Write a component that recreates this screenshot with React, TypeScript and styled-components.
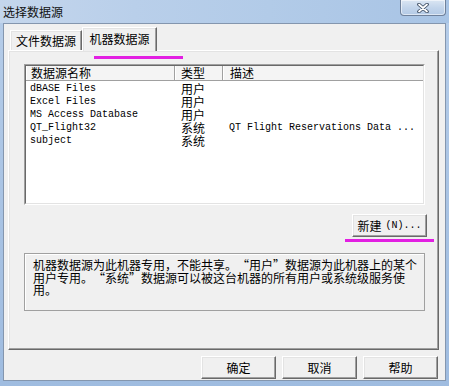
import React from "react";
import styled, { createGlobalStyle } from "styled-components";

const Global = createGlobalStyle`
  *, *::before, *::after { box-sizing: border-box; }
  html, body { margin: 0; padding: 0; }
  body {
    width: 449px;
    height: 386px;
    overflow: hidden;
    font-family: "Noto Sans CJK SC", "Liberation Sans", sans-serif;
    font-size: 12px;
    color: #000;
    background: #a9c4e4;
  }
`;

const Window = styled.div`
  width: 449px;
  height: 386px;
  display: flex;
  flex-direction: column;
  background: linear-gradient(180deg, #b6cde9 0%, #a7c2e3 60%, #9fbce0 100%);
`;

const TitleBar = styled.div`
  height: 23px;
  display: flex;
  align-items: flex-start;
  background: linear-gradient(90deg, #c4d6ec 0%, #b9cfea 30%, #b2cbe8 60%, #a8c4e5 100%);
`;

const Title = styled.div`
  padding-left: 3px;
  line-height: 23px;
  font-size: 12px;
  color: #111;
`;

const CloseButton = styled.div`
  margin-left: auto;
  margin-right: 3px;
  width: 46px;
  height: 16px;
  border: 1px solid #6f819b;
  border-top: none;
  border-radius: 0 0 4px 4px;
  background: linear-gradient(180deg, #dbe6f3 0%, #c3d5eb 50%, #b3cae6 100%);
  box-shadow: inset 0 0 0 1px rgba(255, 255, 255, 0.55);
  display: flex;
  align-items: center;
  justify-content: center;
`;

const Client = styled.div`
  flex: 1;
  margin: 0 3px 5px 3px;
  border: 1px solid #8496ae;
  background: #f0f0f0;
  display: flex;
  flex-direction: column;
`;

const TabStrip = styled.div`
  height: 26px;
  padding-left: 6px;
  display: flex;
  align-items: flex-end;
`;

const Tab = styled.div<{ $active?: boolean }>`
  position: relative;
  z-index: ${(p) => (p.$active ? 2 : 1)};
  width: ${(p) => (p.$active ? 75 : 72)}px;
  height: ${(p) => (p.$active ? 24 : 20)}px;
  margin-bottom: ${(p) => (p.$active ? -1 : 0)}px;
  background: #f0f0f0;
  border-style: solid;
  border-width: 1px 1px 0 1px;
  border-color: #ffffff #696969 transparent #ffffff;
  box-shadow: inset -1px 0 0 #a0a0a0, inset 1px 1px 0 #e3e3e3;
  display: flex;
  align-items: center;
  justify-content: center;
  padding-bottom: ${(p) => (p.$active ? 2 : 0)}px;
  font-size: 12px;
  line-height: 16px;
`;

const Panel = styled.div`
  margin-left: 4px;
  width: 431px;
  height: 300px;
  border: 1px solid;
  border-color: #ffffff #696969 #696969 #ffffff;
  box-shadow: inset -1px -1px 0 #a0a0a0, inset 1px 1px 0 #e3e3e3;
  display: flex;
  flex-direction: column;
  align-items: flex-start;
`;

const Mark = styled.div<{ $left: number; $top: number }>`
  margin-left: ${(p) => p.$left}px;
  margin-top: ${(p) => p.$top}px;
  width: 89px;
  height: 3px;
  background: #e21fe2;
`;

const ListFrame = styled.div`
  margin-left: 15px;
  margin-top: 5px;
  width: 401px;
  height: 141px;
  border: 1px solid;
  border-color: #a0a0a0 #ffffff #ffffff #a0a0a0;
`;

const ListInner = styled.div`
  width: 100%;
  height: 100%;
  border: 1px solid;
  border-color: #696969 #e3e3e3 #e3e3e3 #696969;
  background: #ffffff;
  display: flex;
  flex-direction: column;
`;

const HeaderRow = styled.div`
  display: grid;
  grid-template-columns: 149px 48px 1fr;
  height: 15px;
  background: #f4f4f4;
  border-bottom: 1px solid #a0a0a0;
`;

const HeaderCell = styled.div<{ $pad: number; $last?: boolean }>`
  padding-left: ${(p) => p.$pad}px;
  height: 14px;
  line-height: 14px;
  font-size: 12px;
  border-right: ${(p) => (p.$last ? "none" : "1px solid #a0a0a0")};
  box-shadow: inset 1px 0 0 #ffffff;
  white-space: nowrap;
`;

const Rows = styled.div`
  padding-top: 1px;
  display: flex;
  flex-direction: column;
`;

const Row = styled.div`
  display: grid;
  grid-template-columns: 149px 48px 1fr;
  height: 13px;
  align-items: center;
`;

const NameCell = styled.div`
  padding-left: 4px;
  font-family: "Liberation Mono", "Noto Sans CJK SC", monospace;
  font-size: 10px;
  line-height: 13px;
  white-space: nowrap;
`;

const TypeCell = styled.div`
  padding-left: 6px;
  font-size: 12px;
  line-height: 13px;
  white-space: nowrap;
`;

const DescCell = styled.div`
  padding-left: 6px;
  font-family: "Liberation Mono", monospace;
  font-size: 10px;
  line-height: 13px;
  white-space: nowrap;
  overflow: hidden;
`;

const Button = styled.div<{ $left?: number; $top?: number }>`
  margin-left: ${(p) => p.$left ?? 0}px;
  margin-top: ${(p) => p.$top ?? 0}px;
  width: 75px;
  height: 23px;
  border: 1px solid;
  border-color: #ffffff #696969 #696969 #ffffff;
  box-shadow: inset -1px -1px 0 #a0a0a0, inset 1px 1px 0 #e3e3e3;
  background: #f0f0f0;
  display: flex;
  align-items: center;
  justify-content: center;
  font-size: 12px;
  line-height: 16px;
  white-space: nowrap;
`;

const Mnemonic = styled.span`
  font-family: "Liberation Mono", monospace;
  font-size: 10px;
  margin-left: 4px;
`;

const DescBox = styled.div`
  margin-left: 15px;
  margin-top: 11px;
  width: 401px;
  height: 58px;
  border: 1px solid #a0a0a0;
  box-shadow: inset 1px 1px 0 #ffffff;
  padding: 5px 0 0 8px;
  font-size: 12px;
  line-height: 12.5px;
  white-space: nowrap;
`;

const Quote = styled.span<{ $close?: boolean }>`
  display: inline-block;
  width: 12px;
  text-align: ${(p) => (p.$close ? "left" : "right")};
`;

const ButtonRow = styled.div`
  margin-top: 6px;
  padding-right: 7px;
  display: flex;
  justify-content: flex-end;
  gap: 6px;
`;

const rows = [
  { name: "dBASE Files", type: "用户", desc: "" },
  { name: "Excel Files", type: "用户", desc: "" },
  { name: "MS Access Database", type: "用户", desc: "" },
  { name: "QT_Flight32", type: "系统", desc: "QT Flight Reservations Data ..." },
  { name: "subject", type: "系统", desc: "" },
];

export default function App() {
  return (
    <>
      <Global />
      <Window>
        <TitleBar>
          <Title>选择数据源</Title>
          <CloseButton>
            <svg width="12" height="10" viewBox="0 0 12 10">
              <path d="M2 1.5 L10 8.5 M10 1.5 L2 8.5" stroke="#3a4a60" strokeWidth="3.6" strokeLinecap="round" />
              <path d="M2 1.5 L10 8.5 M10 1.5 L2 8.5" stroke="#ffffff" strokeWidth="1.8" strokeLinecap="round" />
            </svg>
          </CloseButton>
        </TitleBar>
        <Client>
          <TabStrip>
            <Tab>文件数据源</Tab>
            <Tab $active>机器数据源</Tab>
          </TabStrip>
          <Panel>
            <Mark $left={85} $top={5} />
            <ListFrame>
              <ListInner>
                <HeaderRow>
                  <HeaderCell $pad={5}>数据源名称</HeaderCell>
                  <HeaderCell $pad={6}>类型</HeaderCell>
                  <HeaderCell $pad={7} $last>描述</HeaderCell>
                </HeaderRow>
                <Rows>
                  {rows.map((r) => (
                    <Row key={r.name}>
                      <NameCell>{r.name}</NameCell>
                      <TypeCell>{r.type}</TypeCell>
                      <DescCell>{r.desc}</DescCell>
                    </Row>
                  ))}
                </Rows>
              </ListInner>
            </ListFrame>
            <Button $left={343} $top={9}>
              新建<Mnemonic>(N)...</Mnemonic>
            </Button>
            <Mark $left={336} $top={2} />
            <DescBox>
              机器数据源为此机器专用，不能共享。<Quote>“</Quote>用户<Quote $close>”</Quote>数据源为此机器上的某个
              <br />
              用户专用。<Quote>“</Quote>系统<Quote $close>”</Quote>数据源可以被这台机器的所有用户或系统级服务使
              <br />
              用。
            </DescBox>
          </Panel>
          <ButtonRow>
            <Button>确定</Button>
            <Button>取消</Button>
            <Button>帮助</Button>
          </ButtonRow>
        </Client>
      </Window>
    </>
  );
}
